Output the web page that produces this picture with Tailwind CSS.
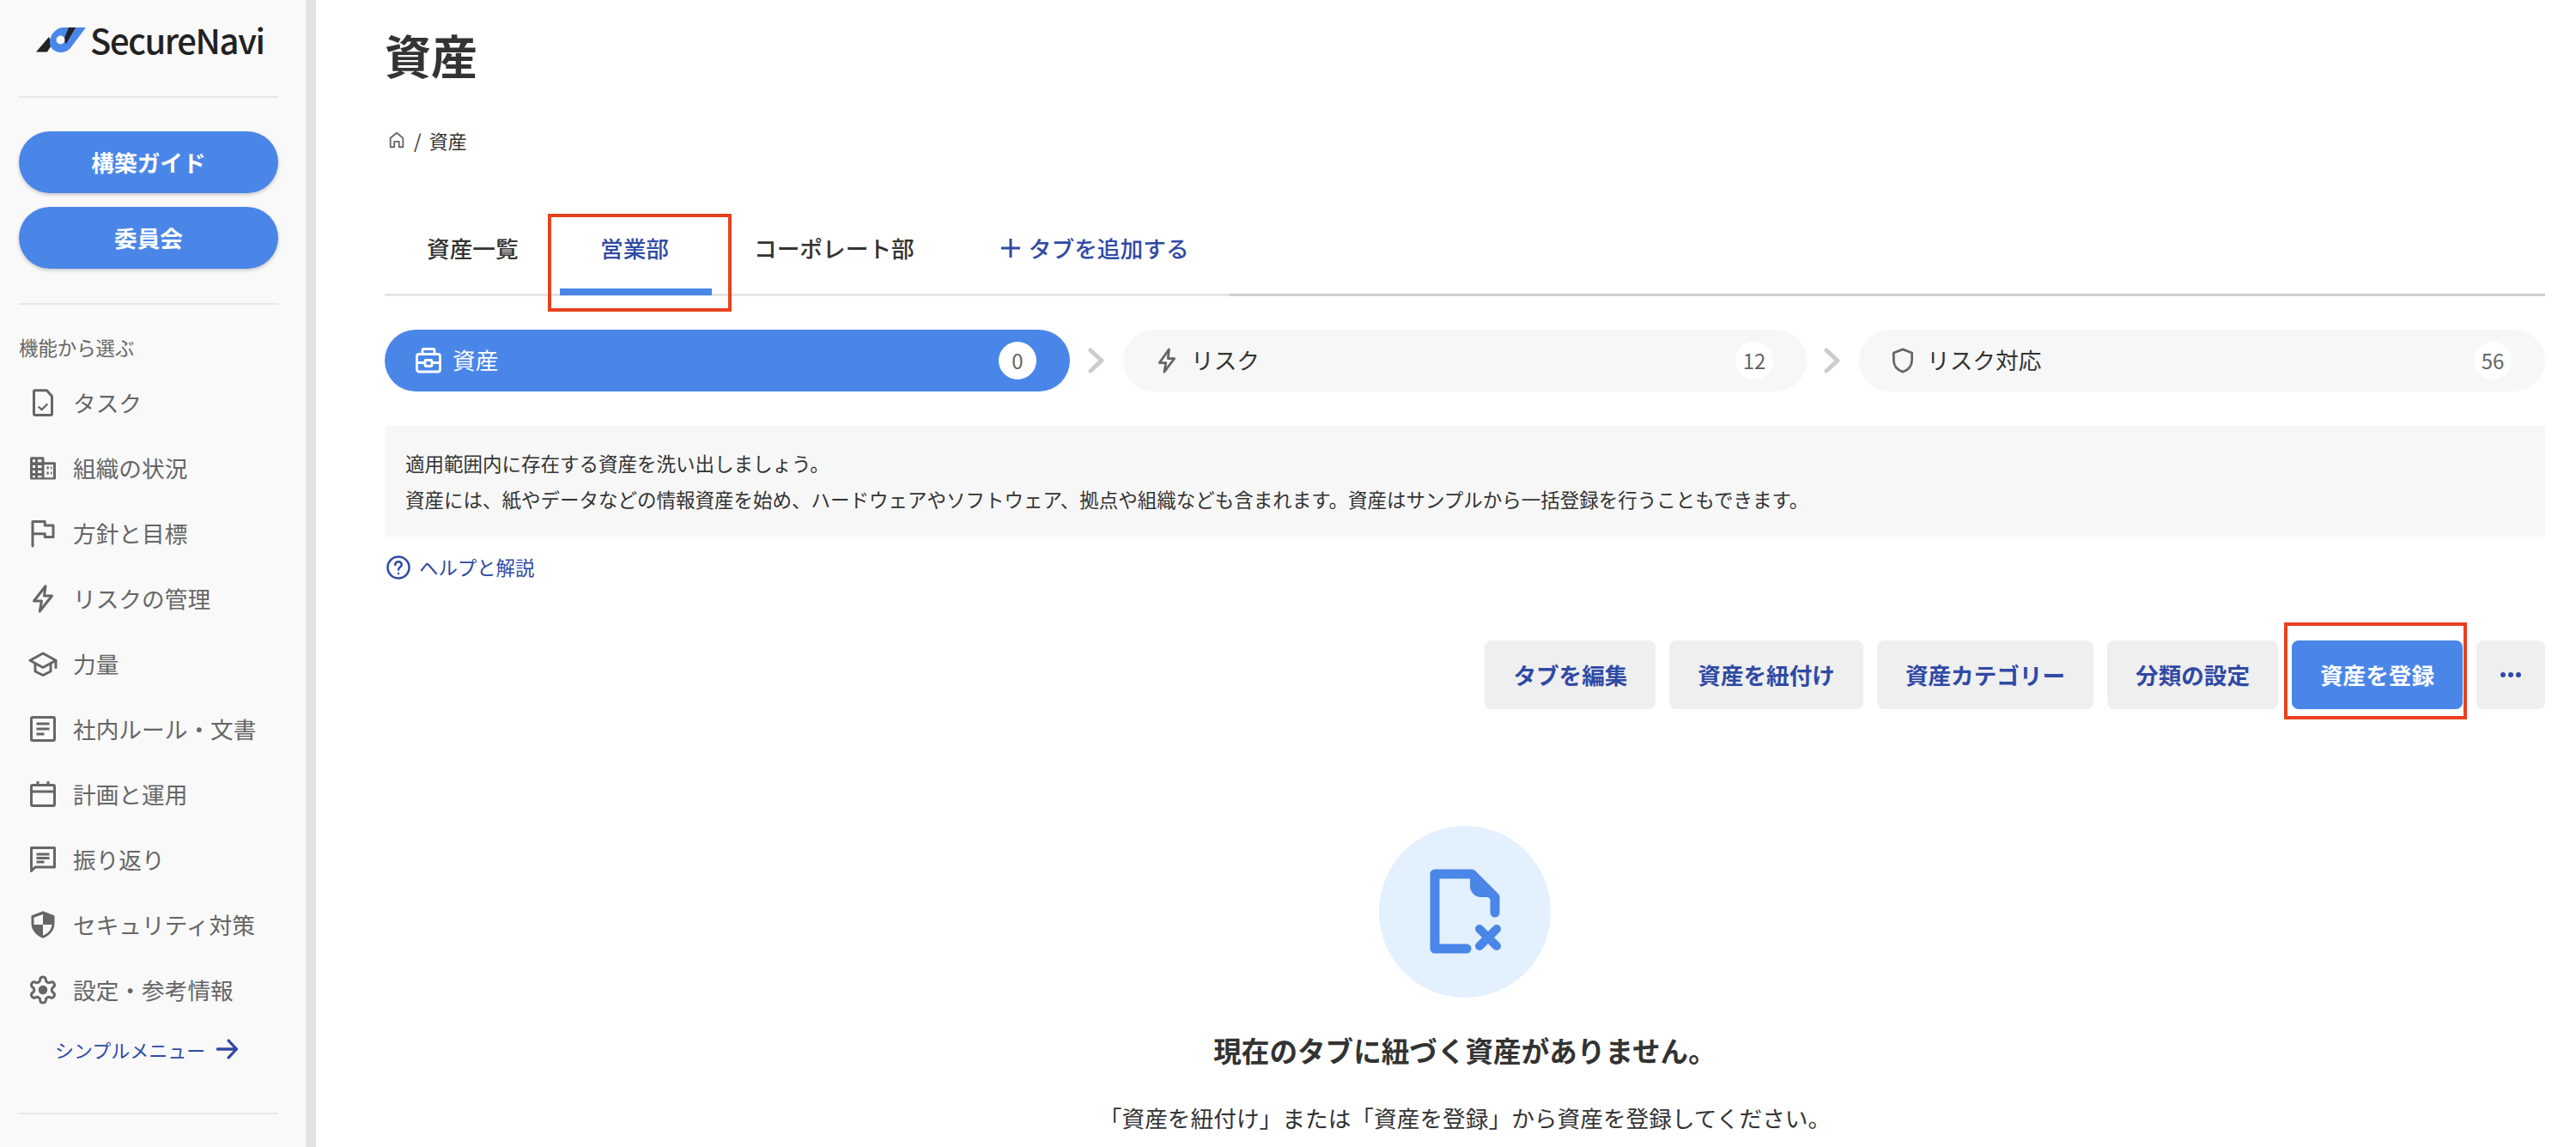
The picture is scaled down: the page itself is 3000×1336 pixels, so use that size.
<!DOCTYPE html>
<html lang="ja">
<head>
  <meta charset="UTF-8" />
  <title>資産 | SecureNavi</title>
  <script src="https://cdn.jsdelivr.net/npm/@tailwindcss/browser@4"></script>
</head>
<body class="h-[1336px] overflow-hidden bg-white text-[#333] font-['Noto_Sans_CJK_JP','Noto_Sans',sans-serif]">
<div class="flex h-[1336px]">

  <!-- sidebar -->
  <aside class="w-[368px] shrink-0 bg-[#f9f9f9] border-r-[12px] border-[#e3e3e3] pl-[22px] pr-[32px]">
    <div class="h-[114px] flex items-start gap-[4px] pt-[31px] pl-[19px] border-b-[2px] border-[#e6e6e6]">
      <svg class="w-[60px] h-[31px] shrink-0" viewBox="0 0 60 31">
        <path d="M1 29.500L16 12l4 8-6 9.500z" fill="#222"/>
        <path d="M59 1L41 25c-3 3.500-7 5-11 5-8 0-14-6-13-13 1-9 8-16 16-16z" fill="#4a86e8"/>
        <path d="M39 1h8L36 20l-3-4z" fill="#222"/>
        <circle cx="29.500" cy="15.500" r="5" fill="#f9f9f9"/>
      </svg>
      <span class="-mt-[13px] text-[40px] leading-[56px] tracking-[-1.4px] font-medium text-[#222]">SecureNavi</span>
    </div>
    <div class="flex flex-col gap-[16px] pt-[39px] pb-[40px] border-b-[2px] border-[#e6e6e6]">
      <button class="h-[72px] rounded-full bg-[#4a86e8] text-white text-[26.7px] font-bold shadow-[0_2px_4px_rgba(0,0,0,0.2)]">構築ガイド</button>
      <button class="h-[72px] rounded-full bg-[#4a86e8] text-white text-[26.7px] font-bold shadow-[0_2px_4px_rgba(0,0,0,0.2)]">委員会</button>
    </div>
    <p class="mt-[33px] text-[22.4px] leading-[32px] text-[#666]">機能から選ぶ</p>
    <nav class="mt-[11px] text-[26.7px] text-[#666]">
      <a class="h-[76px] flex items-center gap-[17px] pl-[10px]">
        <svg class="w-[36px] h-[36px]" viewBox="0 0 24 24" fill="none" stroke="#666" stroke-width="2" stroke-linejoin="round"><path d="M6 2.500h9l4 4.500v14a.6.6 0 0 1-.6.6H5.600a.6.6 0 0 1-.6-.6V3a.6.6 0 0 1 .6-.5z"/><path d="M8.500 15l2.500 2.500 4.500-4.500" stroke-width="1.600"/></svg>
        <span>タスク</span>
      </a>
      <a class="h-[76px] flex items-center gap-[17px] pl-[10px]">
        <svg class="w-[36px] h-[36px]" viewBox="0 0 24 24" fill="none"><path fill-rule="evenodd" fill="#666" d="M2 4.500C2 4 2.400 3.500 3 3.500h9c.5 0 1 .5 1 1V7.500h8c.6 0 1 .4 1 1V20c0 .6-.4 1-1 1H3c-.6 0-1-.4-1-1zM4 5.500v2h2v-2zm4 0v2h3v-2zM4 10v2h2v-2zm4 0v2h3v-2zM4 14v2h2v-2zm4 0v2h3v-2zM4 18v1.500h2V18zm4 0v1.500h3V18zM13 9.500v10h7v-10zm2 1.500h1.500v2H15zm3 0h1v2h-1zm-3 4h1.500v2H15zm3 0h1v2h-1z"/></svg>
        <span>組織の状況</span>
      </a>
      <a class="h-[76px] flex items-center gap-[17px] pl-[10px]">
        <svg class="w-[36px] h-[36px]" viewBox="0 0 24 24" fill="none" stroke="#666" stroke-width="2" stroke-linecap="round" stroke-linejoin="round"><path d="M4 22V3h9.500v3H20v9h-6.500v-2.500H4"/></svg>
        <span>方針と目標</span>
      </a>
      <a class="h-[76px] flex items-center gap-[17px] pl-[10px]">
        <svg class="w-[36px] h-[36px]" viewBox="0 0 24 24" fill="none" stroke="#666" stroke-width="2" stroke-linejoin="round"><path d="M14 2.500L5 14h6l-1.500 8L19 10h-6z"/></svg>
        <span>リスクの管理</span>
      </a>
      <a class="h-[76px] flex items-center gap-[17px] pl-[10px]">
        <svg class="w-[36px] h-[36px]" viewBox="0 0 24 24" fill="none" stroke="#666" stroke-width="2" stroke-linejoin="round" stroke-linecap="round"><path d="M12 4L2 9.500 12 15l10-5.500z"/><path d="M6 12v6l6 3 6-3v-6"/><path d="M22 10v5"/></svg>
        <span>力量</span>
      </a>
      <a class="h-[76px] flex items-center gap-[17px] pl-[10px]">
        <svg class="w-[36px] h-[36px]" viewBox="0 0 24 24" fill="none" stroke="#666" stroke-width="2" stroke-linejoin="round"><rect x="3" y="3" width="18" height="18" rx="1"/><path d="M7 8h10M7 12h10M7 16h6"/></svg>
        <span>社内ルール・文書</span>
      </a>
      <a class="h-[76px] flex items-center gap-[17px] pl-[10px]">
        <svg class="w-[36px] h-[36px]" viewBox="0 0 24 24" fill="none" stroke="#666" stroke-width="2" stroke-linejoin="round"><rect x="3" y="5" width="18" height="16" rx="1"/><path d="M3 10h18M8 2v4M16 2v4"/></svg>
        <span>計画と運用</span>
      </a>
      <a class="h-[76px] flex items-center gap-[17px] pl-[10px]">
        <svg class="w-[36px] h-[36px]" viewBox="0 0 24 24" fill="none" stroke="#666" stroke-width="2" stroke-linejoin="round"><path d="M3 3h18v15H6l-3 3z"/><path d="M7 8h10M7 11h10M7 14h6"/></svg>
        <span>振り返り</span>
      </a>
      <a class="h-[76px] flex items-center gap-[17px] pl-[10px]">
        <svg class="w-[36px] h-[36px]" viewBox="0 0 24 24"><path fill="#666" d="M12 1.500L3 5v6c0 5 3.500 9.500 9 11.500 5.500-2 9-6.500 9-11.500V5z"/><path fill="#f9f9f9" d="M12 4L5 6.500V12h7zM12 12h7c-.4 3.800-3 7-7 8.500z"/></svg>
        <span>セキュリティ対策</span>
      </a>
      <a class="h-[76px] flex items-center gap-[17px] pl-[10px]">
        <svg class="w-[36px] h-[36px]" viewBox="0 0 24 24" fill="none" stroke="#666" stroke-width="2" stroke-linejoin="round"><path d="M12.220 2h-.44a2 2 0 0 0-2 2v.18a2 2 0 0 1-1 1.730l-.43.25a2 2 0 0 1-2 0l-.15-.08a2 2 0 0 0-2.730.73l-.22.38a2 2 0 0 0 .73 2.730l.15.1a2 2 0 0 1 1 1.720v.51a2 2 0 0 1-1 1.740l-.15.09a2 2 0 0 0-.73 2.730l.22.38a2 2 0 0 0 2.730.73l.15-.08a2 2 0 0 1 2 0l.43.25a2 2 0 0 1 1 1.730V20a2 2 0 0 0 2 2h.44a2 2 0 0 0 2-2v-.18a2 2 0 0 1 1-1.730l.43-.25a2 2 0 0 1 2 0l.15.08a2 2 0 0 0 2.730-.73l.22-.39a2 2 0 0 0-.73-2.730l-.15-.08a2 2 0 0 1-1-1.740v-.5a2 2 0 0 1 1-1.740l.15-.09a2 2 0 0 0 .73-2.730l-.22-.38a2 2 0 0 0-2.730-.73l-.15.08a2 2 0 0 1-2 0l-.43-.25a2 2 0 0 1-1-1.730V4a2 2 0 0 0-2-2z"/><circle cx="12" cy="12" r="3.500" fill="#666" stroke="none"/></svg>
        <span>設定・参考情報</span>
      </a>
    </nav>
    <a class="mt-[15px] pl-[42px] flex items-center gap-[12px] text-[22px] text-[#2f4aa5] h-[32px]">
      シンプルメニュー
      <svg class="w-[28px] h-[28px]" viewBox="0 0 24 24" fill="none" stroke="#2f4aa5" stroke-width="2.800" stroke-linecap="round" stroke-linejoin="round"><path d="M2 12h19M13 3.500L21 12l-8 8.500"/></svg>
    </a>
    <div class="mt-[58px] border-b-[2px] border-[#e6e6e6]"></div>
  </aside>

  <!-- main -->
  <main class="flex-1 pl-[80px] pr-[36px] min-w-0">
    <h1 class="mt-[24px] text-[54px] leading-[80px] font-bold text-[#333]">資産</h1>
    <div class="mt-[43px] flex items-center h-[32px] text-[22px] text-[#333]">
      <svg class="w-[22px] h-[22px] ml-[3px]" viewBox="0 0 24 24" fill="none" stroke="#666" stroke-width="2" stroke-linejoin="round"><path d="M4 21V9.500L12 3l8 6.500V21h-5v-7H9v7z"/></svg>
      <span class="ml-[9px] mr-[9px]">/</span>
      <span>資産</span>
    </div>

    <div class="mt-[70px] relative flex h-[114px] text-[26.7px] font-medium">
      <div class="absolute left-0 bottom-[18px] w-[984px] border-b-[3px] border-[#e5e5e5]"></div>
      <div class="absolute left-[984px] right-0 bottom-[18px] border-b-[3px] border-[#cccfd2]"></div>
      <div class="pt-[20px] w-[190px] pl-[49px]">資産一覧</div>
      <div class="relative w-[214px] pt-[20px] pl-[57px] text-[#2f4aa5] border-[4px] border-[#e8401f]">
        <span class="relative -top-[4px]">営業部</span>
        <div class="absolute left-[10px] bottom-[15px] w-[177px] h-[8px] bg-[#4a86e8]"></div>
      </div>
      <div class="pt-[20px] ml-[26px]">コーポレート部</div>
      <div class="pt-[20px] ml-[101px] text-[#2f4aa5] flex items-start gap-[10px]">
        <svg class="w-[22px] h-[22px] mt-[9px]" viewBox="0 0 22 22" stroke="#2f4aa5" stroke-width="3"><path d="M11 0v22M0 11h22"/></svg>
        <span>タブを追加する</span>
      </div>
    </div>

    <div class="mt-[21px] flex items-center h-[72px] text-[26.7px]">
      <div class="w-[798px] h-[72px] rounded-full bg-[#4a86e8] text-white flex items-center pl-[36px] pr-[39px] gap-[13px]">
        <svg class="w-[30px] h-[30px]" viewBox="0 0 30 30" fill="none" stroke="white" stroke-width="2.800" stroke-linejoin="round"><rect x="1.500" y="7.500" width="27" height="20.500" rx="2.500"/><path d="M8 7V3a1.500 1.500 0 0 1 1.500-1.500h11A1.500 1.500 0 0 1 22 3v4M1.500 17.500h9M19.500 17.500h9"/><rect x="11" y="14.500" width="8" height="7" rx="1"/></svg>
        <span class="-mt-[2px]">資産</span>
        <span class="ml-auto w-[44px] h-[44px] rounded-full bg-white text-[#666] text-[24px] flex items-center justify-center">0</span>
      </div>
      <svg class="w-[20px] h-[30px] ml-[21px] mr-[21px]" viewBox="0 0 20 30" fill="none" stroke="#ccc" stroke-width="5" stroke-linecap="round" stroke-linejoin="round"><path d="M3 3l13 12L3 27"/></svg>
      <div class="w-[796px] h-[72px] rounded-full bg-[#f7f7f7] text-[#333] flex items-center pl-[36px] pr-[39px] gap-[13px]">
        <svg class="w-[30px] h-[30px]" viewBox="0 0 24 24" fill="none" stroke="#666" stroke-width="2.200" stroke-linejoin="round"><path d="M14 1.500L5 14h6l-1.500 8.500L19 10h-6z"/></svg>
        <span class="-mt-[2px]">リスク</span>
        <span class="ml-auto w-[44px] h-[44px] rounded-full bg-white text-[#666] text-[24px] flex items-center justify-center">12</span>
      </div>
      <svg class="w-[20px] h-[30px] ml-[20px] mr-[21px]" viewBox="0 0 20 30" fill="none" stroke="#ccc" stroke-width="5" stroke-linecap="round" stroke-linejoin="round"><path d="M3 3l13 12L3 27"/></svg>
      <div class="flex-1 h-[72px] rounded-full bg-[#f7f7f7] text-[#333] flex items-center pl-[36px] pr-[39px] gap-[13px]">
        <svg class="w-[30px] h-[30px]" viewBox="0 0 24 24" fill="none" stroke="#666" stroke-width="2.200" stroke-linejoin="round"><path d="M12 1.500L3.500 4.800v6.700c0 4.700 3 8.900 8.500 11 5.500-2.100 8.500-6.300 8.500-11V4.800z"/></svg>
        <span class="-mt-[2px]">リスク対応</span>
        <span class="ml-auto w-[44px] h-[44px] rounded-full bg-white text-[#666] text-[24px] flex items-center justify-center">56</span>
      </div>
    </div>

    <div class="mt-[40px] h-[129px] bg-[#f7f7f7] px-[24px] pt-[22px] text-[22.5px] leading-[42px] text-[#333]">
      <p>適用範囲内に存在する資産を洗い出しましょう。</p>
      <p>資産には、紙やデータなどの情報資産を始め、ハードウェアやソフトウェア、拠点や組織なども含まれます。資産はサンプルから一括登録を行うこともできます。</p>
    </div>

    <a class="mt-[20px] flex items-center gap-[9px] h-[32px] text-[22.4px] text-[#2f4aa5]">
      <svg class="w-[30px] h-[30px] ml-[1px]" viewBox="0 0 24 24" fill="none" stroke="#2f4aa5" stroke-width="2" stroke-linecap="round"><circle cx="12" cy="12" r="10"/><path d="M9 9.500a3 3 0 0 1 6 0c0 2-3 2.300-3 4.500"/><path d="M12 17.500v.1"/></svg>
      ヘルプと解説
    </a>

    <div class="mt-[69px] flex justify-end gap-[16px] text-[26.6px] font-bold text-[#2f4aa5]">
      <button class="h-[80px] px-[33px] rounded-[8px] bg-[#efefef]">タブを編集</button>
      <button class="h-[80px] px-[33px] rounded-[8px] bg-[#efefef]">資産を紐付け</button>
      <button class="h-[80px] px-[33px] rounded-[8px] bg-[#efefef]">資産カテゴリー</button>
      <button class="h-[80px] px-[33px] rounded-[8px] bg-[#efefef]">分類の設定</button>
      <div class="relative">
        <button class="h-[80px] px-[33px] rounded-[8px] bg-[#4a86e8] text-white">資産を登録</button>
        <div class="absolute -left-[9px] -right-[5px] -top-[21px] -bottom-[12px] border-[4px] border-[#e8401f]"></div>
      </div>
      <button class="h-[80px] w-[80px] rounded-[8px] bg-[#efefef] flex items-center justify-center gap-[3px]">
        <span class="w-[6px] h-[6px] rounded-full bg-[#2f4aa5]"></span>
        <span class="w-[6px] h-[6px] rounded-full bg-[#2f4aa5]"></span>
        <span class="w-[6px] h-[6px] rounded-full bg-[#2f4aa5]"></span>
      </button>
    </div>

    <div class="mt-[136px] flex flex-col items-center">
      <div class="w-[200px] h-[200px] rounded-full bg-[#e3f0fd] flex items-center justify-center">
        <svg class="w-[120px] h-[120px]" viewBox="-4 2 120 120" fill="none" stroke="#4a86e8" stroke-width="11" stroke-linecap="round" stroke-linejoin="round"><path d="M58 105H21V18h43l27 27v18"/><path fill="#4a86e8" stroke-width="6" d="M65 20v12a10 10 0 0 0 10 10h14z"/><path stroke-width="10" d="M73 82l20 20M93 82l-20 20"/></svg>
      </div>
      <p class="mt-[37px] text-[32.6px] leading-[48px] font-bold">現在のタブに紐づく資産がありません。</p>
      <p class="mt-[35px] text-[26.7px] leading-[40px]">「資産を紐付け」または「資産を登録」から資産を登録してください。</p>
    </div>
  </main>
</div>
</body>
</html>
